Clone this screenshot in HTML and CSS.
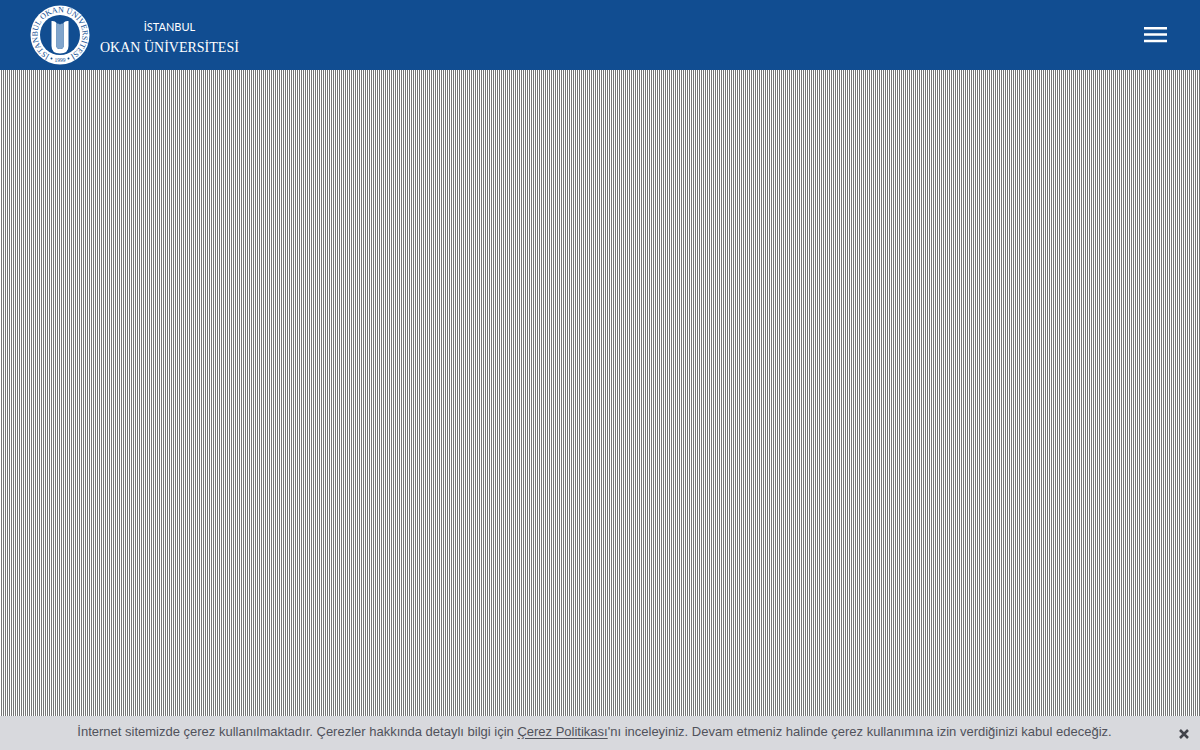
FILE: index.html
```html
<!DOCTYPE html>
<html lang="tr">
<head>
<meta charset="utf-8">
<meta name="viewport" content="width=device-width, initial-scale=1">
<title>İstanbul Okan Üniversitesi</title>
<link rel="stylesheet" href="styles.css">
</head>
<body>
<header class="header">
  <a class="brand" href="#">
    <svg class="seal" viewBox="0 0 120 120" aria-hidden="true">
      <defs>
        <path id="ring" d="M45 102 A45 45 0 1 1 75 102"/>
      </defs>
      <circle cx="60" cy="60" r="59" fill="#fff"/>
      <circle cx="60" cy="60" r="40" fill="#114d91"/>
      <text class="seal-text"><textPath href="#ring" startOffset="50%" text-anchor="middle">İSTANBUL OKAN ÜNİVERSİTESİ</textPath></text>
      <text class="seal-year" x="60" y="113" text-anchor="middle">1999</text>
      <circle cx="43" cy="107" r="2" fill="#114d91"/>
      <circle cx="77" cy="107" r="2" fill="#114d91"/>
      <path d="M43 32 Q50 31 53 36 V84 Q54 88 60 88 Q66 88 67 84 V36 Q70 31 77 32 V82 Q77 97 60 97 Q43 97 43 82Z" fill="#fff"/>
      <path d="M53 37 Q58 36 60 39 Q62 36 67 37 V84 Q66 88 60 88 Q54 88 53 84Z" fill="#6d97c4"/>
      <path d="M56 38V87M60 39V88M64 38V87" stroke="#bcd0e6"/>
    </svg>
    <span class="name">
      <span class="city">İSTANBUL</span>
      <span class="school">OKAN ÜNİVERSİTESİ</span>
    </span>
  </a>
  <button class="menu" type="button" aria-label="Menü">
    <svg viewBox="0 0 24 16" aria-hidden="true"><path d="M1 1.300H24M1 7.600H24M1 14H24" stroke="#fff" stroke-width="2.500"/></svg>
  </button>
</header>
<main class="stage"></main>
<footer class="cookie">
  <p class="notice">İnternet sitemizde çerez kullanılmaktadır. Çerezler hakkında detaylı bilgi için <a href="#">Çerez Politikası</a>'nı inceleyiniz. Devam etmeniz halinde çerez kullanımına izin verdiğinizi kabul edeceğiz.</p>
  <button class="close" type="button" aria-label="Kapat">
    <svg viewBox="0 0 10 10" aria-hidden="true"><path d="M1 1L9 9M9 1L1 9" stroke="#41434a" stroke-width="2.500"/></svg>
  </button>
</footer>
</body>
</html>
```

FILE: styles.css
```css
* { box-sizing: border-box; }
body {
  margin: 0;
  min-height: 100vh;
  display: flex;
  flex-direction: column;
  font-family: "Liberation Sans", Arial, sans-serif;
}
.header {
  display: flex;
  align-items: center;
  justify-content: space-between;
  height: 70px;
  padding: 0 33px 0 30px;
  background: #114d91;
}
.brand {
  display: flex;
  align-items: center;
  gap: 10px;
  color: #fff;
  text-decoration: none;
}
.seal { width: 60px; height: 60px; overflow: visible; }
.seal-text { font: 16px "Liberation Serif", serif; fill: #114d91; }
.seal-year { font: 11px "Liberation Serif", serif; fill: #114d91; }
.name {
  display: flex;
  flex-direction: column;
  align-items: center;
  padding-top: 6px;
}
.city { font: 11px/20px Lato, sans-serif; }
.school { font: 14px/22px "Liberation Serif", serif; }
.menu, .close {
  display: flex;
  padding: 0;
  border: 0;
  background: none;
  cursor: pointer;
}
.menu svg { width: 24px; height: 16px; }
.stage {
  flex: 1;
  background: repeating-linear-gradient(90deg, #fff 0 1px, #757575 1px 2px);
}
.cookie {
  display: flex;
  align-items: center;
  min-height: 34px;
  padding: 0 11px 0 10px;
  background: #d8d9dd;
  color: #50525b;
}
.notice {
  flex: 1;
  margin: 0;
  padding-bottom: 2px;
  text-align: center;
  font-size: 13px;
  line-height: 20px;
}
.notice a { color: inherit; text-underline-offset: 2px; }
.close { padding-top: 2px; }
.close svg { width: 10px; height: 10px; }
```
